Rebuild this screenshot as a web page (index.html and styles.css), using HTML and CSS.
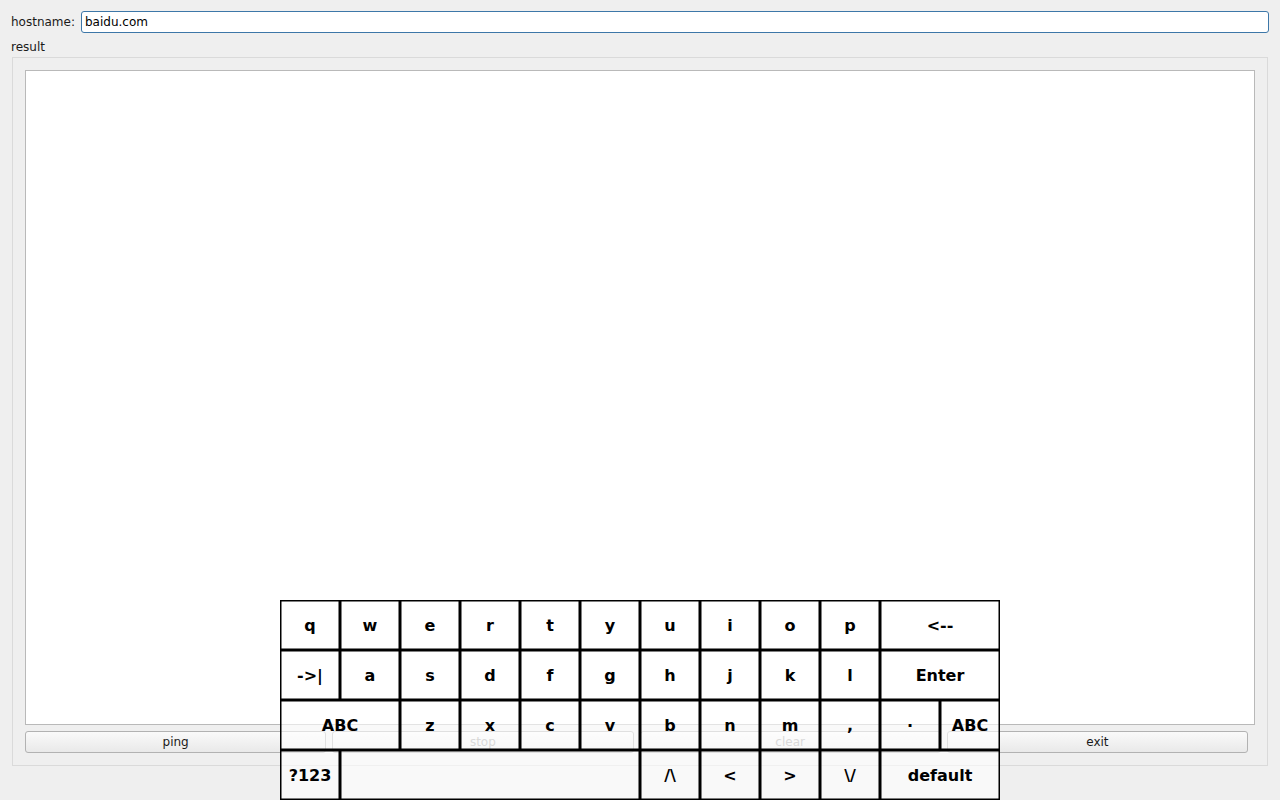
FILE: index.html
```html
<!DOCTYPE html>
<html>
<head>
<meta charset="utf-8">
<link rel="stylesheet" href="styles.css">
</head>
<body>
<div class="app">
  <div class="host-row">
    <span class="label">hostname:</span>
    <div class="input">baidu.com</div>
  </div>
  <div class="result-label">result</div>
  <div class="group">
    <div class="textarea"></div>
    <div class="buttons">
      <div class="btn">ping</div>
      <div class="btn disabled">stop</div>
      <div class="btn disabled">clear</div>
      <div class="btn">exit</div>
    </div>
  </div>
</div>
<div class="keyboard">
  <div class="krow">
    <div class="key">q</div><div class="key">w</div><div class="key">e</div><div class="key">r</div><div class="key">t</div><div class="key">y</div><div class="key">u</div><div class="key">i</div><div class="key">o</div><div class="key">p</div><div class="key wide">&lt;--</div>
  </div>
  <div class="krow">
    <div class="key">-&gt;|</div><div class="key">a</div><div class="key">s</div><div class="key">d</div><div class="key">f</div><div class="key">g</div><div class="key">h</div><div class="key">j</div><div class="key">k</div><div class="key">l</div><div class="key wide">Enter</div>
  </div>
  <div class="krow">
    <div class="key wide">ABC</div><div class="key">z</div><div class="key">x</div><div class="key">c</div><div class="key">v</div><div class="key">b</div><div class="key">n</div><div class="key">m</div><div class="key">,</div><div class="key">·</div><div class="key">ABC</div>
  </div>
  <div class="krow">
    <div class="key">?123</div><div class="key space"></div><div class="key">/\</div><div class="key">&lt;</div><div class="key">&gt;</div><div class="key">\/</div><div class="key wide">default</div>
  </div>
</div>
</body>
</html>
```
FILE: styles.css
```css
html, body {
  margin: 0;
  padding: 0;
}
body {
  width: 1280px;
  height: 800px;
  overflow: hidden;
  background: #efefef;
  font-family: "DejaVu Sans", sans-serif;
  font-size: 12px;
  color: #1a1a1a;
  position: relative;
}
.app {
  display: flex;
  flex-direction: column;
}
.host-row {
  display: flex;
  align-items: center;
  padding: 11px 11px 0 11px;
  height: 22px;
}
.label {
  margin-right: 6px;
}
.input {
  flex: 1;
  height: 22px;
  box-sizing: border-box;
  background: #fff;
  border: 1px solid #3d77a8;
  border-radius: 3px;
  padding: 0 3px;
  line-height: 20px;
  color: #000;
}
.result-label {
  padding-left: 11px;
  margin-top: 7px;
  height: 15px;
  line-height: 15px;
}
.group {
  margin: 2px 12px 0 12px;
  border: 1px solid #dadada;
  padding: 12px 12px 12px 12px;
  display: flex;
  flex-direction: column;
  gap: 6px;
}
.textarea {
  height: 655px;
  box-sizing: border-box;
  background: #fff;
  border: 1px solid #b9b9b9;
}
.buttons {
  display: flex;
  gap: 6px;
  margin-right: 7px;
}
.btn {
  flex: 1;
  height: 22px;
  box-sizing: border-box;
  border: 1px solid #b2b2b2;
  border-radius: 3px;
  background: linear-gradient(#fafafa, #e9e9e9);
  text-align: center;
  line-height: 20px;
  color: #1a1a1a;
}
.btn.disabled {
  color: #a0a0a0;
}
.keyboard {
  position: absolute;
  left: 280px;
  top: 600px;
  width: 720px;
  display: flex;
  flex-direction: column;
}
.krow {
  display: flex;
}
.key {
  width: 60px;
  height: 50px;
  box-sizing: border-box;
  border: 1px solid #000;
  box-shadow: inset 0 0 0 0.5px #000;
  background: rgba(255, 255, 255, 0.6);
  display: flex;
  align-items: center;
  justify-content: center;
  font-weight: bold;
  font-size: 16px;
  color: #000;
}
.key.wide {
  width: 120px;
}
.key.space {
  width: 300px;
}
```
